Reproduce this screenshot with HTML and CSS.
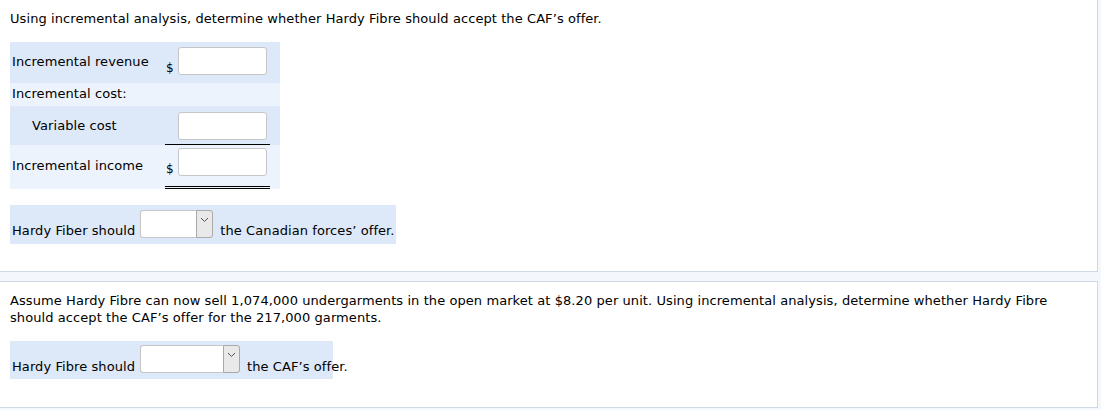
FILE: index.html
```html
<!DOCTYPE html>
<html>
<head>
<meta charset="utf-8">
<link rel="stylesheet" href="styles.css">
</head>
<body>
<div class="panel panel-one">
  <p class="question">Using incremental analysis, determine whether Hardy Fibre should accept the CAF’s offer.</p>
  <div class="calc">
    <div class="row row-dark r1">
      <div class="label">Incremental revenue</div>
      <div class="cell"><span class="dollar">$</span><span class="input"></span></div>
    </div>
    <div class="row row-light r2">
      <div class="label">Incremental cost:</div>
    </div>
    <div class="row row-dark r3">
      <div class="label indent">Variable cost</div>
      <div class="cell single"><span class="dollar"></span><span class="input"></span></div>
    </div>
    <div class="row row-light r4">
      <div class="label">Incremental income</div>
      <div class="cell double"><span class="dollar">$</span><span class="input"></span></div>
    </div>
  </div>
  <div class="answer a1">
    <span class="txt">Hardy Fiber should</span>
    <span class="select s1"><span class="select-box"></span><span class="select-btn"><svg width="9" height="6" viewBox="0 0 9 6"><path d="M1 1 L4.5 4.5 L8 1" fill="none" stroke="#555" stroke-width="1"/></svg></span></span>
    <span class="txt">the Canadian forces’ offer.</span>
  </div>
</div>
<div class="panel panel-two">
  <p class="question">Assume Hardy Fibre can now sell 1,074,000 undergarments in the open market at $8.20 per unit. Using incremental analysis, determine whether Hardy Fibre should accept the CAF’s offer for the 217,000 garments.</p>
  <div class="answer a2">
    <span class="txt">Hardy Fibre should</span>
    <span class="select s2"><span class="select-box"></span><span class="select-btn"><svg width="9" height="6" viewBox="0 0 9 6"><path d="M1 1 L4.5 4.5 L8 1" fill="none" stroke="#555" stroke-width="1"/></svg></span></span>
    <span class="txt">the CAF’s offer.</span>
  </div>
</div>
</body>
</html>
```
FILE: styles.css
```css
html, body {
  margin: 0;
  padding: 0;
}
body {
  background: #f4f7fb;
  font-family: "DejaVu Sans", Verdana, sans-serif;
  font-size: 13px;
  line-height: 17px;
  letter-spacing: 0.08px;
  color: #000;
  width: 1101px;
  height: 410px;
  overflow: hidden;
}
.panel {
  background: #fff;
  width: 1098px;
  border-right: 1px solid #cfd9e6;
  box-sizing: border-box;
}
.panel-one {
  height: 272px;
  border-bottom: 1px solid #cfd9e6;
  padding: 10px 0 0 10px;
}
.panel-two {
  margin-top: 9px;
  border-top: 1px solid #cfd9e6;
  border-bottom: 1px solid #cfd9e6;
  height: 127px;
  padding: 10px 0 0 10px;
}
.question {
  margin: 0;
  width: 1060px;
}
.calc {
  margin-top: 15px;
  width: 270px;
}
.row {
  display: flex;
  align-items: center;
}
.row-dark { background: #dde8f8; }
.row-light { background: #ecf3fd; }
.r1 { height: 41px; }
.r2 { height: 23px; }
.r3 { height: 39px; }
.r4 { height: 44px; }
.label {
  width: 153px;
  padding-left: 2px;
  white-space: nowrap;
}
.label.indent {
  padding-left: 22px;
  width: 133px;
}
.r1 .label { margin-top: -2px; }
.r2 .label { margin-top: -2px; }
.r4 .label { margin-top: -4px; }
.cell {
  display: flex;
  align-items: flex-end;
  width: 105px;
  box-sizing: border-box;
  padding-left: 1px;
}
.r1 .cell { margin-top: -3px; }
.r3 .cell {
  align-self: flex-end;
  height: 33px;
  border-bottom: 1px solid #000;
  align-items: flex-start;
}
.r4 .cell {
  align-self: flex-end;
  height: 41px;
  padding-bottom: 6px;
  border-bottom: 3px double #000;
  align-items: flex-start;
}
.r4 .cell .dollar { margin-top: 14px; }
.dollar {
  width: 12px;
  font-size: 12px;
  line-height: 14px;
}
.input {
  display: inline-block;
  width: 89px;
  height: 28px;
  box-sizing: border-box;
  background: #fff;
  border: 1px solid #c6c6c6;
  border-radius: 3px;
}
.answer {
  display: flex;
  align-items: flex-end;
  padding: 0 3px 0 2px;
  box-sizing: border-box;
  background: #dde8f8;
  white-space: nowrap;
}
.answer > * { flex-shrink: 0; }
.a1 {
  margin-top: 16px;
  height: 39px;
  width: 386px;
  padding-bottom: 5px;
}
.a2 {
  margin-top: 15px;
  height: 38px;
  width: 323px;
  padding-bottom: 4px;
}
.select {
  display: flex;
  height: 28px;
  box-sizing: border-box;
  margin-left: 5px;
  margin-right: 7px;
}
.a1 .select { margin-bottom: 1px; }
.a2 .select { margin-bottom: 2px; }
.s1 { width: 73px; }
.s2 { width: 100px; }
.select-box {
  flex: 1;
  background: #fff;
  border: 1px solid #c6c6c6;
  border-right: none;
  border-radius: 3px 0 0 3px;
}
.select-btn {
  width: 17px;
  box-sizing: border-box;
  background: #e9e9e9;
  border: 1px solid #a9a9a9;
  border-radius: 0 3px 3px 0;
  display: flex;
  justify-content: center;
  padding-top: 6px;
}
.select-btn svg { display: block; }
```
